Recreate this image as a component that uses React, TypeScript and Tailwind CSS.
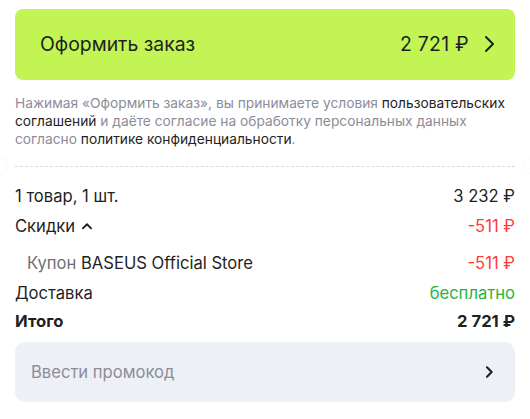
import React from 'react';

const Chevron: React.FC<{ className?: string; strokeWidth?: number }> = ({ className, strokeWidth = 2 }) => (
    <svg viewBox="0 0 24 24" fill="none" stroke="currentColor" strokeWidth={strokeWidth} strokeLinecap="round" strokeLinejoin="round" className={className}>
        <path d="M9 5l7 7-7 7" />
    </svg>
);

const Row: React.FC<{ left: React.ReactNode; right: React.ReactNode; className?: string }> = ({ left, right, className }) => (
    <div className={`flex justify-between items-center ${className || ''}`}>
        <div className="flex items-center">{left}</div>
        <div>{right}</div>
    </div>
);

export default function App() {
    return (
        <div className="bg-white w-[530px] h-[419px] overflow-hidden text-[#1f1f24] font-['Inter',sans-serif] relative">
            <div className="px-[15px] pt-[9px]">
                <button className="w-full h-[71px] rounded-[8px] bg-[#c2f553] flex items-center justify-between pl-[25px] pr-[14px]">
                    <span className="text-[19.4px]">Оформить заказ</span>
                    <span className="flex items-center gap-[8px]">
                        <span className="text-[19.4px] tracking-[0.3px]">2 721 ₽</span>
                        <Chevron className="w-[24px] h-[24px]" strokeWidth={2} />
                    </span>
                </button>

                <p className="mt-[14px] text-[13.75px] leading-[18px] text-[#8d8d99]">
                    Нажимая «Оформить заказ», вы принимаете условия <span className="text-[#1f1f24]">пользовательских соглашений</span> и даёте согласие на обработку персональных данных согласно <span className="text-[#1f1f24]">политике конфиденциальности</span>.
                </p>
            </div>

            <div className="relative mt-[18px] h-[1px]">
                <div className="mx-[15px] border-t border-dashed border-[#d9dbe0]"></div>
                <div className="absolute -left-[8px] -top-[8px] w-[16px] h-[16px] rounded-full bg-white shadow-[inset_0_0_3px_rgba(0,0,0,0.06)]"></div>
                <div className="absolute -right-[8px] -top-[8px] w-[16px] h-[16px] rounded-full bg-white shadow-[inset_0_0_3px_rgba(0,0,0,0.06)]"></div>
            </div>

            <div className="px-[15px] pt-[19px] text-[16.6px] leading-[20px]">
                <Row left={<span>1 товар, 1 шт.</span>} right={<span>3 232 ₽</span>} />
                <Row
                    className="mt-[10px]"
                    left={<><span>Скидки</span><svg viewBox="0 0 24 24" fill="none" stroke="currentColor" strokeWidth={3.2} strokeLinecap="round" strokeLinejoin="round" className="w-[14px] h-[14px] ml-[5px]"><path d="M5 16l7-7 7 7" /></svg></>}
                    right={<span className="text-[#ff3b3b]">-511 ₽</span>}
                />
                <Row
                    className="mt-[17px] pl-[12px]"
                    left={<span><span className="text-[#6f6f78]">Купон</span> BASEUS Official Store</span>}
                    right={<span className="text-[#ff3b3b]">-511 ₽</span>}
                />
                <Row className="mt-[10px]" left={<span>Доставка</span>} right={<span className="text-[#1fb53c]">бесплатно</span>} />
                <Row className="mt-[8px] font-bold" left={<span>Итого</span>} right={<span>2 721 ₽</span>} />

                <div className="mt-[11px] h-[60px] rounded-[10px] bg-[#edf0f5] flex items-center justify-between pl-[16px] pr-[18px]">
                    <span className="text-[#8d8d99]">Ввести промокод</span>
                    <Chevron className="w-[16px] h-[16px]" strokeWidth={3.2} />
                </div>
            </div>
        </div>
    );
}
